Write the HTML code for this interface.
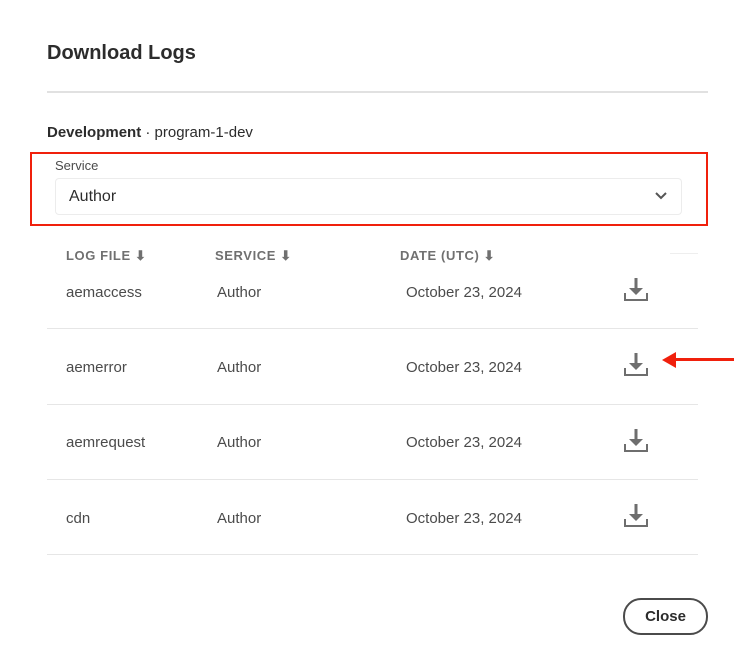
<!DOCTYPE html>
<html><head><style>
body{margin:0;width:750px;height:666px;background:#fff;font-family:"Liberation Sans",sans-serif;color:#2c2c2c;position:relative;overflow:hidden}
.a{position:absolute;white-space:nowrap}
.h{font-size:13px;color:#707070;letter-spacing:0.6px;top:248px;font-weight:600}
.r{font-size:15px;color:#4b4b4b}
.sep{position:absolute;left:47px;width:651px;height:1px;background:#e6e6e6}
</style></head><body>
<div class="a" style="left:47px;top:42px;font-size:20px;font-weight:bold;color:#2c2c2c">Download Logs</div>
<div style="position:absolute;left:47px;top:91px;width:661px;height:2px;background:#e1e1e1"></div>
<div class="a" style="left:47px;top:124px;font-size:15px"><b>Development</b> · program-1-dev</div>
<div style="position:absolute;left:30px;top:152px;width:674px;height:70px;border:2px solid #f0200c"></div>
<div class="a" style="left:55px;top:158px;font-size:13px;color:#4b4b4b">Service</div>
<div style="position:absolute;left:55px;top:178px;width:625px;height:35px;border:1px solid #ececec;border-radius:4px"></div>
<div class="a" style="left:69px;top:188px;font-size:16px;color:#2c2c2c">Author</div>
<svg class="a" style="left:654px;top:191px" width="14" height="10"><path d="M2 2l5 5 5-5" stroke="#555" stroke-width="2" fill="none"/></svg>
<div class="sep" style="left:670px;width:28px;top:253px;background:#eee"></div>
<div class="a h" style="left:66px">LOG FILE ⬇</div>
<div class="a h" style="left:215px">SERVICE ⬇</div>
<div class="a h" style="left:400px">DATE (UTC) ⬇</div>
<div class="a r" style="left:66px;top:284px">aemaccess</div><div class="a r" style="left:217px;top:284px">Author</div><div class="a r" style="left:406px;top:284px">October 23, 2024</div>
<div class="sep" style="top:328px"></div>
<div class="a r" style="left:66px;top:359px">aemerror</div><div class="a r" style="left:217px;top:359px">Author</div><div class="a r" style="left:406px;top:359px">October 23, 2024</div>
<div class="sep" style="top:404px"></div>
<div class="a r" style="left:66px;top:434px">aemrequest</div><div class="a r" style="left:217px;top:434px">Author</div><div class="a r" style="left:406px;top:434px">October 23, 2024</div>
<div class="sep" style="top:479px"></div>
<div class="a r" style="left:66px;top:510px">cdn</div><div class="a r" style="left:217px;top:510px">Author</div><div class="a r" style="left:406px;top:510px">October 23, 2024</div>
<div class="sep" style="top:554px"></div>
<svg class="a" style="left:622px;top:277px" width="28" height="26"><g fill="#6e6e6e"><rect x="12.5" y="1" width="3" height="13"/><path d="M7 11h14l-7 7z"/><path d="M2 16h2v6h20v-6h2v8H2z"/></g></svg>
<svg class="a" style="left:622px;top:352px" width="28" height="26"><g fill="#6e6e6e"><rect x="12.5" y="1" width="3" height="13"/><path d="M7 11h14l-7 7z"/><path d="M2 16h2v6h20v-6h2v8H2z"/></g></svg>
<svg class="a" style="left:622px;top:428px" width="28" height="26"><g fill="#6e6e6e"><rect x="12.5" y="1" width="3" height="13"/><path d="M7 11h14l-7 7z"/><path d="M2 16h2v6h20v-6h2v8H2z"/></g></svg>
<svg class="a" style="left:622px;top:503px" width="28" height="26"><g fill="#6e6e6e"><rect x="12.5" y="1" width="3" height="13"/><path d="M7 11h14l-7 7z"/><path d="M2 16h2v6h20v-6h2v8H2z"/></g></svg>
<svg class="a" style="left:660px;top:350px" width="80" height="20"><path d="M2 10l14-8v6h58v3H16v7z" fill="#f0200c"/></svg>
<div style="position:absolute;left:623px;top:598px;width:81px;height:33px;border:2px solid #4b4b4b;border-radius:18px;font-size:15px;font-weight:bold;color:#2c2c2c;text-align:center;line-height:33px">Close</div>
</body></html>
